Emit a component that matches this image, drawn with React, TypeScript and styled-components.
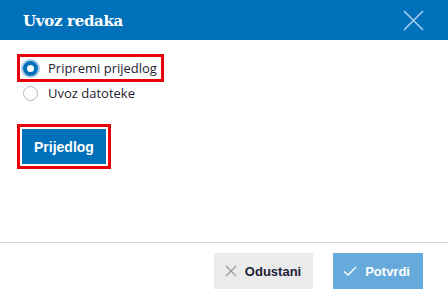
import React, { useState } from "react";
import styled, { createGlobalStyle } from "styled-components";

const Global = createGlobalStyle`
  html, body { margin: 0; padding: 0; background: #fff; }
  body { width: 448px; height: 298px; overflow: hidden; font-family: "Open Sans", "Liberation Sans", sans-serif; }
  * { box-sizing: border-box; }
`;

const Dialog = styled.div`
  width: 448px;
  height: 298px;
  display: flex;
  flex-direction: column;
  background: #fff;
`;

const Header = styled.div`
  height: 40px;
  flex: none;
  background: #0070ba;
  display: flex;
  align-items: center;
  justify-content: space-between;
  padding: 0 24px 0 23px;
`;

const Title = styled.div`
  font-family: "DejaVu Serif", serif;
  font-weight: bold;
  font-size: 15px;
  color: #fff;
  letter-spacing: -0.3px;
  margin-top: 1px;
`;

const CloseButton = styled.button`
  border: 0;
  background: transparent;
  padding: 0;
  width: 22px;
  height: 22px;
  display: flex;
  align-items: center;
  justify-content: center;
  cursor: pointer;
`;

const Body = styled.div`
  flex: 1;
  display: flex;
  flex-direction: column;
  align-items: flex-start;
  padding: 14px 17px 0;
`;

const Highlight = styled.div`
  border: 3px solid #e8000b;
  display: flex;
`;

const RadioRow = styled.label<{ $inset?: boolean }>`
  display: flex;
  align-items: center;
  height: ${(p) => (p.$inset ? "20px" : "22px")};
  padding: 0 4px 0 ${(p) => (p.$inset ? "0px" : "3px")};
  gap: 10px;
  font-size: 13px;
  color: #1e2433;
  cursor: pointer;
`;

const RadioCircle = styled.span<{ $checked: boolean }>`
  width: 15px;
  height: 15px;
  border-radius: 50%;
  flex: none;
  border: ${(p) => (p.$checked ? "4.5px solid #0070ba" : "1px solid #b9b9b9")};
  background: #fff;
  box-shadow: ${(p) => (p.$checked ? "0 0 0 2px #a9cde9" : "none")};
`;

const PlainRow = styled.div`
  padding-left: 6px;
  margin-top: 1px;
`;

const ButtonFrame = styled(Highlight)`
  margin-top: 21px;
  padding: 2px;
`;

const PrimaryButton = styled.button`
  height: 35px;
  padding: 0 12px;
  border: 0;
  background: #0070ba;
  color: #fff;
  font-family: "Liberation Sans", Arial, sans-serif;
  font-weight: bold;
  font-size: 14px;
  cursor: pointer;
`;

const Footer = styled.div`
  height: 56px;
  flex: none;
  border-top: 1px solid #d3d3d3;
  display: flex;
  justify-content: flex-end;
  align-items: flex-start;
  gap: 20px;
  padding: 10px 25px 0 0;
`;

const FooterButton = styled.button<{ $primary?: boolean }>`
  height: 36px;
  border: 0;
  display: flex;
  align-items: center;
  gap: 8px;
  padding: ${(p) => (p.$primary ? "0 13px 0 10px" : "0 12px 0 11px")};
  background: ${(p) => (p.$primary ? "#65aadb" : "#ebebeb")};
  color: ${(p) => (p.$primary ? "#fff" : "#1b1f3a")};
  font-family: "Liberation Sans", Arial, sans-serif;
  font-weight: bold;
  font-size: 13px;
  cursor: pointer;
`;

export default function App() {
  const [choice, setChoice] = useState<"prep" | "file">("prep");
  return (
    <>
      <Global />
      <Dialog>
        <Header>
          <Title>Uvoz redaka</Title>
          <CloseButton aria-label="Zatvori">
            <svg width="21" height="21" viewBox="0 0 21 21">
              <path d="M1 1 L20 20 M20 1 L1 20" stroke="#a9cfee" strokeWidth="1.6" fill="none" />
            </svg>
          </CloseButton>
        </Header>
        <Body>
          <Highlight>
            <RadioRow onClick={() => setChoice("prep")}>
              <RadioCircle $checked={choice === "prep"} />
              Pripremi prijedlog
            </RadioRow>
          </Highlight>
          <PlainRow>
            <RadioRow $inset onClick={() => setChoice("file")}>
              <RadioCircle $checked={choice === "file"} />
              Uvoz datoteke
            </RadioRow>
          </PlainRow>
          <ButtonFrame>
            <PrimaryButton>Prijedlog</PrimaryButton>
          </ButtonFrame>
        </Body>
        <Footer>
          <FooterButton>
            <svg width="12" height="12" viewBox="0 0 12 12">
              <path d="M1 1 L11 11 M11 1 L1 11" stroke="#9a9a9a" strokeWidth="1.3" fill="none" />
            </svg>
            Odustani
          </FooterButton>
          <FooterButton $primary>
            <svg width="14" height="10" viewBox="0 0 14 10">
              <path d="M1 5.5 L5 9 L13 1" stroke="#fff" strokeWidth="1.4" fill="none" />
            </svg>
            Potvrdi
          </FooterButton>
        </Footer>
      </Dialog>
    </>
  );
}
